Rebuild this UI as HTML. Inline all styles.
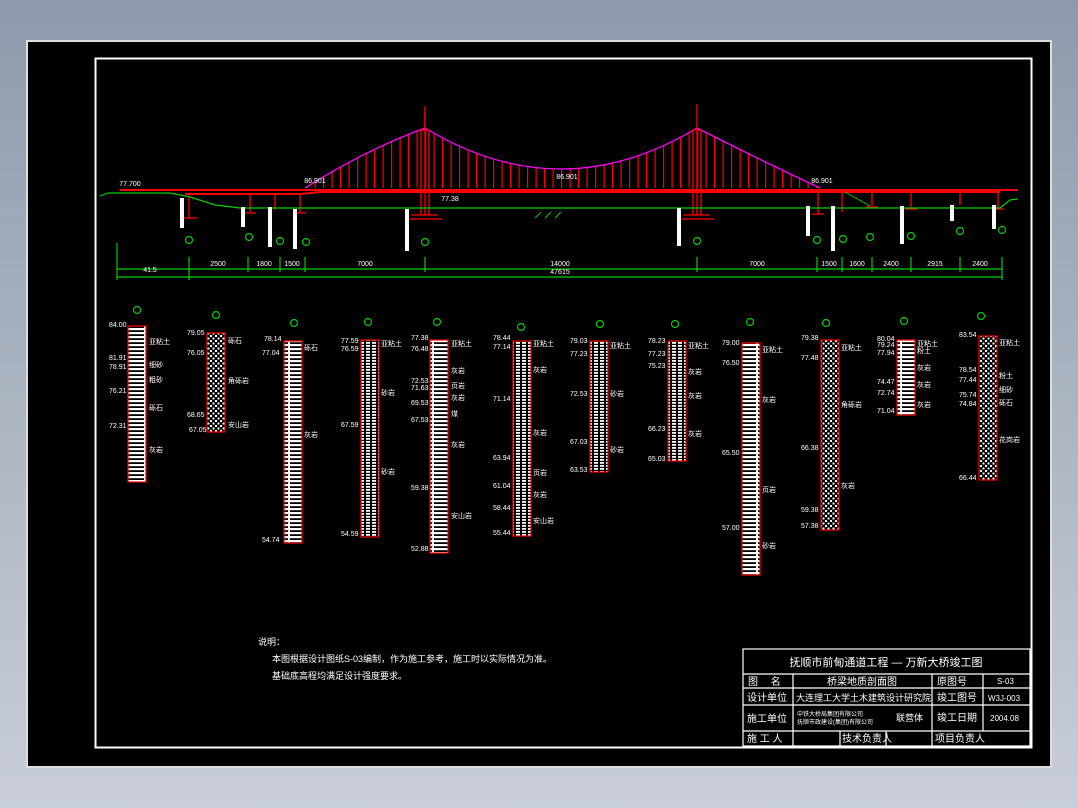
<!DOCTYPE html>
<html><head><meta charset="utf-8"><style>
html,body{margin:0;padding:0}
body{width:1078px;height:808px;background:linear-gradient(#8e9aab,#c9ced8);overflow:hidden;position:relative;font-family:"Liberation Sans","Noto Sans CJK SC",sans-serif}
#blk{position:absolute;left:26px;top:40px;width:1026px;height:728px;background:#000;box-sizing:border-box;border:2px solid #ddd}
svg{position:absolute;left:0;top:0}
</style></head><body>
<div id="blk"></div>
<svg width="1078" height="808" viewBox="0 0 1078 808" font-family="Liberation Sans, Noto Sans CJK SC, sans-serif">
<defs>
<pattern id="st" width="18" height="4" patternUnits="userSpaceOnUse"><rect width="18" height="2.2" fill="#fff"/><rect x="0" y="2.2" width="2" height="1.8" fill="#fff"/></pattern>
<pattern id="dot" width="5" height="5" patternUnits="userSpaceOnUse"><rect width="2" height="2" fill="#fff"/><rect x="2.5" y="2.5" width="2" height="2" fill="#fff"/></pattern>
<pattern id="dsh" width="6" height="3" patternUnits="userSpaceOnUse"><rect width="4" height="1.8" fill="#fff"/></pattern>
<pattern id="hg" width="8.5" height="100" patternUnits="userSpaceOnUse"><rect x="0" width="1.2" height="100" fill="#f00"/></pattern>
</defs>
<rect x="95.5" y="58.5" width="936" height="689" fill="none" stroke="#fff" stroke-width="2"/>
<path d="M305 188 Q365 150 425 128 Q560 210 697 128 Q760 160 820 188 Z" fill="url(#hg)"/>
<path d="M305 188 Q365 150 425 128 Q560 210 697 128 Q760 160 820 188" fill="none" stroke="#f0f" stroke-width="1.3"/>
<g stroke="#f00" stroke-width="1.3" fill="none">
<path d="M120 190 H1018 M185 194 H300 L320 192 H1000" stroke-width="2"/>
<path d="M425 112 V215 M421 130 H429 V215 H421 Z M412 215 H438 M408 219 H442"/>
<path d="M425 106 V130 M697 104 V215 M693 130 H701 V215 H693 Z M684 215 H710 M680 219 H714"/>
<path d="M189 194 V218 M181 218 H197 M250 194 V212 M244 213 H256 M275 194 V210 M300 194 V212 M294 213 H306 M818 190 V214 M812 214 H824 M842 192 V212 M872 192 V206 M866 207 H878 M911 192 V208 M905 209 H917 M960 192 V205 M998 192 V208 M992 209 H1004"/>
</g>
<path d="M100 196 L108 193 H170 L190 197 L215 205 L240 208 H1000 L1010 200 L1018 199" fill="none" stroke="#0c0" stroke-width="1.2"/>
<path d="M845 192 L870 206" stroke="#0c0"/>
<path d="M535 218 l6-6 M545 218 l6-6 M555 218 l6-6" stroke="#0c0"/>
<g fill="#fff">
<rect x="180" y="198" width="4" height="30"/><rect x="241" y="207" width="4" height="20"/><rect x="268" y="207" width="4" height="40"/><rect x="293" y="209" width="4" height="40"/><rect x="405" y="209" width="4" height="42"/><rect x="677" y="208" width="4" height="38"/><rect x="806" y="206" width="4" height="30"/><rect x="831" y="206" width="4" height="45"/><rect x="900" y="206" width="4" height="38"/><rect x="950" y="205" width="4" height="16"/><rect x="992" y="205" width="4" height="24"/>
</g>
<g fill="none" stroke="#0c0" stroke-width="1.2">
<circle cx="189" cy="240" r="3.5"/><circle cx="249" cy="237" r="3.5"/><circle cx="280" cy="241" r="3.5"/><circle cx="306" cy="242" r="3.5"/><circle cx="425" cy="242" r="3.5"/><circle cx="697" cy="241" r="3.5"/><circle cx="817" cy="240" r="3.5"/><circle cx="843" cy="239" r="3.5"/><circle cx="870" cy="237" r="3.5"/><circle cx="911" cy="236" r="3.5"/><circle cx="960" cy="231" r="3.5"/><circle cx="1002" cy="230" r="3.5"/>
</g>
<g stroke="#0c0" stroke-width="1.2"><path d="M117 269 H1002 M117 277 H1002 M117 243 V280 M189 257 V280 M248 257 V272 M280 257 V272 M305 257 V272 M425 257 V272 M697 257 V272 M817 257 V272 M842 257 V272 M872 257 V272 M911 257 V272 M960 257 V272 M1002 257 V280"/></g>
<g fill="#fff" font-size="7" text-anchor="middle"><text x="150" y="272">41.5</text><text x="218" y="266">2500</text><text x="264" y="266">1800</text><text x="292" y="266">1500</text><text x="365" y="266">7000</text><text x="560" y="266">14000</text><text x="757" y="266">7000</text><text x="829" y="266">1500</text><text x="857" y="266">1600</text><text x="891" y="266">2400</text><text x="935" y="266">2915</text><text x="980" y="266">2400</text><text x="560" y="274">47615</text>
<text x="450" y="201">77.38</text><text x="130" y="186">77.700</text><text x="315" y="183">86.901</text><text x="567" y="179">86.901</text><text x="822" y="183">86.901</text></g>
<g stroke="#f00" stroke-width="1.2">
<rect x="128" y="326" width="18" height="156" fill="url(#st)"/>
<rect x="207" y="333" width="18" height="99" fill="url(#dot)"/>
<rect x="284" y="341" width="18" height="202" fill="url(#st)"/>
<rect x="361" y="340" width="18" height="197" fill="url(#dsh)"/>
<rect x="430" y="340" width="18" height="213" fill="url(#st)"/>
<rect x="513" y="341" width="18" height="195" fill="url(#dsh)"/>
<rect x="590" y="341" width="18" height="131" fill="url(#dsh)"/>
<rect x="668" y="341" width="18" height="120" fill="url(#dsh)"/>
<rect x="742" y="343" width="18" height="232" fill="url(#st)"/>
<rect x="821" y="340" width="18" height="190" fill="url(#dot)"/>
<rect x="897" y="340" width="18" height="75" fill="url(#st)"/>
<rect x="979" y="336" width="18" height="144" fill="url(#dot)"/>
</g>
<g fill="none" stroke="#0c0" stroke-width="1.2"><circle cx="137" cy="310" r="3.5"/><circle cx="216" cy="315" r="3.5"/><circle cx="294" cy="323" r="3.5"/><circle cx="368" cy="322" r="3.5"/><circle cx="437" cy="322" r="3.5"/><circle cx="521" cy="327" r="3.5"/><circle cx="600" cy="324" r="3.5"/><circle cx="675" cy="324" r="3.5"/><circle cx="750" cy="322" r="3.5"/><circle cx="826" cy="323" r="3.5"/><circle cx="904" cy="321" r="3.5"/><circle cx="981" cy="316" r="3.5"/></g>
<g fill="#fff" font-size="7">
<text x="109" y="327">84.00</text><text x="109" y="360">81.91</text><text x="109" y="369">78.91</text><text x="109" y="393">76.21</text><text x="109" y="428">72.31</text>
<text x="149" y="344">亚粘土</text><text x="149" y="367">细砂</text><text x="149" y="382">粗砂</text><text x="149" y="410">砾石</text><text x="149" y="452">灰岩</text>
<text x="187" y="335">79.05</text><text x="187" y="355">76.05</text><text x="187" y="417">68.65</text><text x="189" y="432">67.05</text><text x="228" y="343">砾石</text><text x="228" y="383">角砾岩</text><text x="228" y="427">安山岩</text>
<text x="264" y="341">78.14</text><text x="262" y="355">77.04</text><text x="262" y="542">54.74</text><text x="304" y="350">砾石</text><text x="304" y="437">灰岩</text>
<text x="341" y="343">77.59</text><text x="341" y="351">76.59</text><text x="341" y="427">67.59</text><text x="341" y="536">54.59</text><text x="381" y="346">亚粘土</text><text x="381" y="395">砂岩</text><text x="381" y="474">砂岩</text>
<text x="411" y="340">77.38</text><text x="411" y="351">76.48</text><text x="411" y="383">72.53</text><text x="411" y="390">71.63</text><text x="411" y="405">69.53</text><text x="411" y="422">67.53</text><text x="411" y="490">59.38</text><text x="411" y="551">52.88</text>
<text x="451" y="346">亚粘土</text><text x="451" y="373">灰岩</text><text x="451" y="388">页岩</text><text x="451" y="400">灰岩</text><text x="451" y="416">煤</text><text x="451" y="447">灰岩</text><text x="451" y="518">安山岩</text>
<text x="493" y="340">78.44</text><text x="493" y="349">77.14</text><text x="493" y="401">71.14</text><text x="493" y="460">63.94</text><text x="493" y="488">61.04</text><text x="493" y="510">58.44</text><text x="493" y="535">55.44</text><text x="533" y="346">亚粘土</text><text x="533" y="372">灰岩</text><text x="533" y="435">灰岩</text><text x="533" y="475">页岩</text><text x="533" y="497">灰岩</text><text x="533" y="523">安山岩</text>
<text x="570" y="343">79.03</text><text x="570" y="356">77.23</text><text x="570" y="396">72.53</text><text x="570" y="444">67.03</text><text x="570" y="472">63.53</text><text x="610" y="348">亚粘土</text><text x="610" y="396">砂岩</text><text x="610" y="452">砂岩</text>
<text x="648" y="343">78.23</text><text x="648" y="356">77.23</text><text x="648" y="368">75.23</text><text x="648" y="431">66.23</text><text x="648" y="461">65.03</text><text x="688" y="348">亚粘土</text><text x="688" y="374">灰岩</text><text x="688" y="398">灰岩</text><text x="688" y="436">灰岩</text>
<text x="722" y="345">79.00</text><text x="722" y="365">76.50</text><text x="722" y="455">65.50</text><text x="722" y="530">57.00</text><text x="762" y="352">亚粘土</text><text x="762" y="402">灰岩</text><text x="762" y="492">页岩</text><text x="762" y="548">砂岩</text>
<text x="801" y="340">79.38</text><text x="801" y="360">77.48</text><text x="801" y="450">66.38</text><text x="801" y="512">59.38</text><text x="801" y="528">57.38</text><text x="841" y="350">亚粘土</text><text x="841" y="407">角砾岩</text><text x="841" y="488">灰岩</text>
<text x="877" y="341">80.04</text><text x="877" y="347">79.24</text><text x="877" y="355">77.94</text><text x="877" y="384">74.47</text><text x="877" y="395">72.74</text><text x="877" y="413">71.04</text><text x="917" y="346">亚粘土</text><text x="917" y="353">粉土</text><text x="917" y="370">灰岩</text><text x="917" y="387">灰岩</text><text x="917" y="407">灰岩</text>
<text x="959" y="337">83.54</text><text x="959" y="372">78.54</text><text x="959" y="382">77.44</text><text x="959" y="397">75.74</text><text x="959" y="406">74.84</text><text x="959" y="480">66.44</text><text x="999" y="345">亚粘土</text><text x="999" y="378">粉土</text><text x="999" y="392">细砂</text><text x="999" y="405">砾石</text><text x="999" y="442">花岗岩</text>
</g>
<g fill="#fff" font-size="9"><text x="258" y="645">说明：</text><text x="272" y="662">本图根据设计图纸S-03编制，作为施工参考，施工时以实际情况为准。</text><text x="272" y="679">基础底高程均满足设计强度要求。</text></g>
<g stroke="#fff" stroke-width="1.2" fill="none">
<rect x="743" y="649" width="287" height="97"/>
<path d="M743 674 H1030 M743 688 H1030 M743 705 H1030 M743 731 H1030 M793 674 V746 M932 674 V746 M983 674 V731 M840 731 V746 M886 731 V746"/>
</g>
<g fill="#fff" font-size="10"><text x="886" y="666" text-anchor="middle" font-size="11">抚顺市前甸通道工程 — 万新大桥竣工图</text>
<text x="748" y="685">图　 名</text><text x="862" y="685" text-anchor="middle">桥梁地质剖面图</text><text x="937" y="685">原图号</text><text x="997" y="684" font-size="8">S-03</text>
<text x="747" y="701">设计单位</text><text x="796" y="701" font-size="9">大连理工大学土木建筑设计研究院</text><text x="937" y="701">竣工图号</text><text x="988" y="701" font-size="8">W3J-003</text>
<text x="747" y="722">施工单位</text><text x="797" y="716" font-size="6">中铁大桥局集团有限公司</text><text x="797" y="724" font-size="6">抚顺市政建设(集团)有限公司</text><text x="896" y="721" font-size="9">联营体</text><text x="937" y="721">竣工日期</text><text x="990" y="721" font-size="8">2004.08</text>
<text x="747" y="742">施 工 人</text><text x="842" y="742">技术负责人</text><text x="935" y="742">项目负责人</text></g>
</svg>
</body></html>
